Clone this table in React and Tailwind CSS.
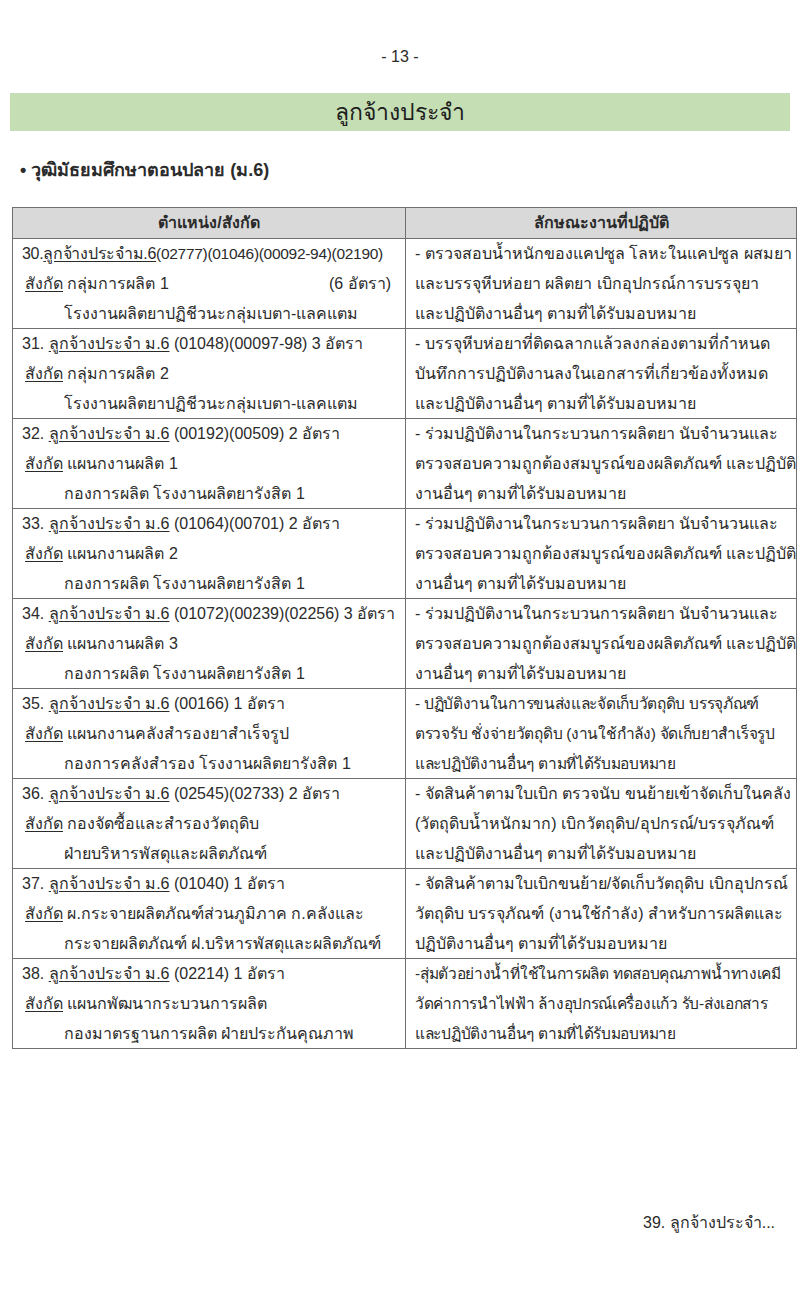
import React from 'react';

const rows = [
  {
    no: '30.',
    tight: true,
    head: '(02777)(01046)(00092-94)(02190)',
    unit: 'กลุ่มการผลิต 1',
    rate: '(6 อัตรา)',
    sub: 'โรงงานผลิตยาปฏิชีวนะกลุ่มเบตา-แลคแตม',
    work: [
      '- ตรวจสอบน้ำหนักของแคปซูล โลหะในแคปซูล ผสมยา',
      'และบรรจุหีบห่อยา ผลิตยา เบิกอุปกรณ์การบรรจุยา',
      'และปฏิบัติงานอื่นๆ ตามที่ได้รับมอบหมาย',
    ],
  },
  {
    no: '31.',
    head: '(01048)(00097-98) 3 อัตรา',
    unit: 'กลุ่มการผลิต 2',
    sub: 'โรงงานผลิตยาปฏิชีวนะกลุ่มเบตา-แลคแตม',
    work: [
      '- บรรจุหีบห่อยาที่ติดฉลากแล้วลงกล่องตามที่กำหนด',
      'บันทึกการปฏิบัติงานลงในเอกสารที่เกี่ยวข้องทั้งหมด',
      'และปฏิบัติงานอื่นๆ ตามที่ได้รับมอบหมาย',
    ],
  },
  {
    no: '32.',
    head: '(00192)(00509) 2 อัตรา',
    unit: 'แผนกงานผลิต 1',
    sub: 'กองการผลิต โรงงานผลิตยารังสิต 1',
    work: [
      '- ร่วมปฏิบัติงานในกระบวนการผลิตยา นับจำนวนและ',
      'ตรวจสอบความถูกต้องสมบูรณ์ของผลิตภัณฑ์ และปฏิบัติ',
      'งานอื่นๆ ตามที่ได้รับมอบหมาย',
    ],
  },
  {
    no: '33.',
    head: '(01064)(00701) 2 อัตรา',
    unit: 'แผนกงานผลิต 2',
    sub: 'กองการผลิต โรงงานผลิตยารังสิต 1',
    work: [
      '- ร่วมปฏิบัติงานในกระบวนการผลิตยา นับจำนวนและ',
      'ตรวจสอบความถูกต้องสมบูรณ์ของผลิตภัณฑ์ และปฏิบัติ',
      'งานอื่นๆ ตามที่ได้รับมอบหมาย',
    ],
  },
  {
    no: '34.',
    head: '(01072)(00239)(02256) 3 อัตรา',
    unit: 'แผนกงานผลิต 3',
    sub: 'กองการผลิต โรงงานผลิตยารังสิต 1',
    work: [
      '- ร่วมปฏิบัติงานในกระบวนการผลิตยา นับจำนวนและ',
      'ตรวจสอบความถูกต้องสมบูรณ์ของผลิตภัณฑ์ และปฏิบัติ',
      'งานอื่นๆ ตามที่ได้รับมอบหมาย',
    ],
  },
  {
    no: '35.',
    small: true,
    head: '(00166) 1 อัตรา',
    unit: 'แผนกงานคลังสำรองยาสำเร็จรูป',
    sub: 'กองการคลังสำรอง โรงงานผลิตยารังสิต 1',
    work: [
      '- ปฏิบัติงานในการขนส่งและจัดเก็บวัตถุดิบ บรรจุภัณฑ์',
      'ตรวจรับ ชั่งจ่ายวัตถุดิบ (งานใช้กำลัง) จัดเก็บยาสำเร็จรูป',
      'และปฏิบัติงานอื่นๆ ตามที่ได้รับมอบหมาย',
    ],
  },
  {
    no: '36.',
    head: '(02545)(02733) 2 อัตรา',
    unit: 'กองจัดซื้อและสำรองวัตถุดิบ',
    sub: 'ฝ่ายบริหารพัสดุและผลิตภัณฑ์',
    work: [
      '- จัดสินค้าตามใบเบิก ตรวจนับ ขนย้ายเข้าจัดเก็บในคลัง',
      '(วัตถุดิบน้ำหนักมาก) เบิกวัตถุดิบ/อุปกรณ์/บรรจุภัณฑ์',
      'และปฏิบัติงานอื่นๆ ตามที่ได้รับมอบหมาย',
    ],
  },
  {
    no: '37.',
    head: '(01040) 1 อัตรา',
    unit: 'ผ.กระจายผลิตภัณฑ์ส่วนภูมิภาค ก.คลังและ',
    sub: 'กระจายผลิตภัณฑ์ ฝ.บริหารพัสดุและผลิตภัณฑ์',
    work: [
      '- จัดสินค้าตามใบเบิกขนย้าย/จัดเก็บวัตถุดิบ เบิกอุปกรณ์',
      'วัตถุดิบ บรรจุภัณฑ์ (งานใช้กำลัง) สำหรับการผลิตและ',
      'ปฏิบัติงานอื่นๆ ตามที่ได้รับมอบหมาย',
    ],
  },
  {
    no: '38.',
    small: true,
    head: '(02214) 1 อัตรา',
    unit: 'แผนกพัฒนากระบวนการผลิต',
    sub: 'กองมาตรฐานการผลิต ฝ่ายประกันคุณภาพ',
    work: [
      '-สุ่มตัวอย่างน้ำที่ใช้ในการผลิต ทดสอบคุณภาพน้ำทางเคมี',
      'วัดค่าการนำไฟฟ้า ล้างอุปกรณ์เครื่องแก้ว รับ-ส่งเอกสาร',
      'และปฏิบัติงานอื่นๆ ตามที่ได้รับมอบหมาย',
    ],
  },
];

const App = () => {
  return (
    <div className="w-[800px] h-[1297px] bg-white text-[#2b2b2b] font-['Tahoma','Liberation_Sans','Noto_Sans',sans-serif]">
      {/* Page number */}
      <div className="pt-[46px] text-center text-[16px] leading-[22px]">- 13 -</div>

      {/* Section band */}
      <div className="mt-[25px] mx-[10px] h-[38px] bg-[#c5deb3] flex items-center justify-center">
        <span className="text-[23px] font-medium text-[#1f1f1f]">ลูกจ้างประจำ</span>
      </div>

      {/* Sub heading */}
      <div className="mt-[24px] ml-[20px] text-[18px] font-bold leading-[30px]">
        • วุฒิมัธยมศึกษาตอนปลาย (ม.6)
      </div>

      {/* Table */}
      <div className="mt-[22px] ml-[12px] w-[785px] border border-[#6f6f6f] text-[16px]">
        <div className="grid grid-cols-[393px_1fr] bg-[#d9d9d9] h-[30px] font-bold">
          <div className="border-r border-[#6f6f6f] flex items-center justify-center">ตำแหน่ง/สังกัด</div>
          <div className="flex items-center justify-center">ลักษณะงานที่ปฏิบัติ</div>
        </div>
        {rows.map((r) => (
          <div key={r.no} className="grid grid-cols-[393px_1fr] border-t border-[#6f6f6f] h-[90px] leading-[30px]">
            <div className="border-r border-[#6f6f6f] pl-[9px] pr-[10px] whitespace-nowrap">
              {r.tight ? (
                <div className="tracking-[-0.3px]">
                  {r.no}
                  <span className="underline underline-offset-2">ลูกจ้างประจำม.6</span>
                  <span className="text-[15.5px]">{r.head}</span>
                </div>
              ) : (
                <div>
                  {r.no} <span className="underline underline-offset-2">ลูกจ้างประจำ ม.6</span> {r.head}
                </div>
              )}
              <div className="flex justify-between pl-[3px] pr-[4px]">
                <span>
                  <span className="underline underline-offset-2">สังกัด</span> {r.unit}
                </span>
                {r.rate && <span>{r.rate}</span>}
              </div>
              <div className="pl-[42px]">{r.sub}</div>
            </div>
            <div
              className={
                r.small
                  ? 'pl-[9px] pr-[4px] whitespace-nowrap text-[15.5px] tracking-[-0.3px]'
                  : 'pl-[9px] pr-[4px] whitespace-nowrap text-[16px]'
              }
            >
              {r.work.map((w, i) => (
                <div key={i}>{w}</div>
              ))}
            </div>
          </div>
        ))}
      </div>

      {/* Continuation */}
      <div className="mt-[162px] ml-[643px] text-[16px]">39. ลูกจ้างประจำ...</div>
    </div>
  );
};

export default App;
